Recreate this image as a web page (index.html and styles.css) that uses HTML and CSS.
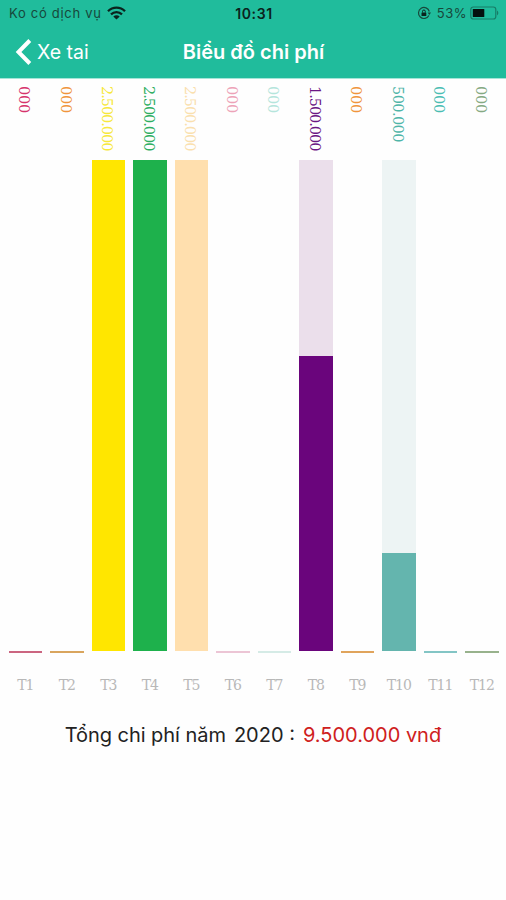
FILE: index.html
```
<!DOCTYPE html>
<html lang="vi">

<head>
    <meta charset="UTF-8">
    <title>Biểu đồ chi phí</title>
    <link rel="stylesheet" href="styles.css">
</head>

<body>
    <div class="header">
        <div class="status">
            <div class="carrier">
                <span class="carrier_name">Ko có dịch vụ</span>
                <svg class="wifi" width="19" height="14" viewBox="0 0 19 14">
                    <path d="M1 5.2C5.8.4 13.2.4 18 5.2M4 8.3c3.2-3 7.800-3 11 0" fill="none" stroke="#0b231d" stroke-width="2.300" />
                    <path d="M6.300 10.400c1.900-1.700 4.500-1.700 6.400 0L9.500 13.600z" fill="#0b231d" />
                </svg>
            </div>
            <div class="time">10:31</div>
            <div class="power">
                <svg class="lock" width="14" height="14" viewBox="0 0 14 14">
                    <path d="M11.900 9.500A5.500 5.500 0 1 1 12.300 5.500" fill="none" stroke="#17483b" stroke-width="1.200" />
                    <path d="M10.600 6.600h3.400l-1.700 2.300z" fill="#17483b" />
                    <rect x="4.500" y="6.400" width="4.800" height="3.600" rx=".5" fill="#0b231d" />
                    <path d="M5.500 6.500V5.400a1.400 1.400 0 0 1 2.800 0v1.100" fill="none" stroke="#0b231d" />
                </svg>
                <span class="percent">53%</span>
                <svg width="29" height="14" viewBox="0 0 29 14">
                    <rect x=".8" y="1" width="25" height="12" rx="2.500" fill="none" stroke="#167c66" stroke-width="1.200" />
                    <rect x="2.800" y="3" width="11.500" height="8" rx=".6" fill="#04110e" />
                    <path d="M27 4.600c1.800.8 1.800 4 0 4.800z" fill="#167c66" />
                </svg>
            </div>
        </div>
        <div class="nav">
            <div class="back">
                <svg width="17" height="28" viewBox="0 0 17 28">
                    <path d="M14.800 2.500L3.500 14l11.300 11.500" fill="none" stroke="#fff" stroke-width="4" />
                </svg>
                <span>Xe tai</span>
            </div>
            <div class="title">Biểu đồ chi phí</div>
        </div>
    </div>

    <div class="chart" id="chart"></div>

    <div class="total">
        <span class="total_label">Tổng chi phí năm</span>
        <span class="total_year">2020 :</span>
        <span class="total_value">9.500.000 vnđ</span>
    </div>

    <script type="text/javascript">
    var max = 2500000;
    // value, text colour, bar colour, track colour
    var months = [
        [0, '#d6336c', '#cb6580'],
        [0, '#f0953c', '#d9a55e'],
        [2500000, '#f7e83c', '#ffe600'],
        [2500000, '#2fae62', '#1eb14c'],
        [2500000, '#fae0ae', '#ffdfae'],
        [0, '#eda3b8', '#ecc5d5'],
        [0, '#b5e5dc', '#d5ebe6'],
        [1500000, '#6c1684', '#6a057c', '#ebdfeb'],
        [0, '#f0953c', '#e0a45c'],
        [500000, '#4fb5a8', '#64b5ae', '#edf4f4'],
        [0, '#4bbdb3', '#83c5c5'],
        [0, '#85a983', '#98b28c']
    ];

    function format(n) {
        if (n == 0) {
            return '000';
        }
        return String(n).replace(/\B(?=(\d{3})+$)/g, '.');
    }

    var html = '';
    for (var i = 0; i < months.length; i++) {
        var m = months[i];
        var h = m[0] / max * 100;
        html += '<div class="month">' +
            '<div class="value' + (m[0] ? ' value_mid' : '') + (m[0] >= 1000000 ? ' value_long' : '') + '" style="color:' + m[1] + '">' + format(m[0]) + '</div>' +
            '<div class="track" style="background:' + (m[3] || 'none') + '">' +
            '<div class="bar' + (m[0] ? '' : ' bar_empty') + '" style="height:' + h + '%;background:' + m[2] + '"></div>' +
            '</div>' +
            '<div class="name">T' + (i + 1) + '</div>' +
            '</div>';
    }
    document.getElementById('chart').innerHTML = html;
    </script>
</body>

</html>
```
FILE: styles.css
```
body {
    margin: 0;
    background-color: #FEFEFE;
    font-family: Inter, "Liberation Sans", sans-serif;
}

.header {
    height: 78px;
    background-color: #20BC9C;
    border-bottom: 1px solid #A5E5D8;
}

.status {
    display: grid;
    grid-template-columns: 1fr auto 1fr;
    align-items: center;
    height: 26px;
    padding: 0 7px 0 9px;
    font-size: 13px;
    color: #17483B;
}

.carrier,
.power {
    display: flex;
    align-items: center;
}

.carrier_name {
    letter-spacing: 0.7px;
}

.wifi {
    margin-left: 5px;
}

.time {
    color: #0B231D;
    font-size: 14px;
    font-weight: 600;
    letter-spacing: 0.6px;
}

.power {
    justify-content: flex-end;
}

.percent {
    margin: 0 3px 0 6px;
    letter-spacing: 0.5px;
}

.nav {
    display: grid;
    grid-template-columns: 1fr auto 1fr;
    align-items: center;
    height: 52px;
    color: #FFF;
}

.back {
    display: flex;
    align-items: center;
    gap: 5px;
    padding-left: 15px;
    font-size: 19.5px;
}

.title {
    font-size: 20px;
    font-weight: 600;
    padding-left: 1px;
}

.chart {
    display: grid;
    grid-template-columns: repeat(12, 1fr);
    column-gap: 8px;
    padding: 0 7.5px 0 8.5px;
    font-family: "DejaVu Serif", serif;
}

.month {
    display: flex;
    flex-direction: column;
    align-items: center;
}

.value {
    height: 73px;
    padding-top: 7px;
    padding-right: 2px;
    box-sizing: border-box;
    writing-mode: vertical-rl;
    font-size: 14.5px;
    line-height: 20px;
    letter-spacing: -0.2px;
    white-space: nowrap;
}

.value_mid {
    letter-spacing: -0.6px;
}

.value_long {
    letter-spacing: -1.05px;
}

.track {
    display: flex;
    align-items: flex-end;
    width: 100%;
    height: 491px;
    margin-top: 8px;
}

.bar {
    width: 100%;
    min-height: 2px;
}

.bar_empty {
    margin-bottom: -2px;
}

.name {
    margin-top: 24px;
    font-size: 14px;
    line-height: 20px;
    letter-spacing: -1px;
    color: #B8B8B8;
}

.total {
    display: flex;
    justify-content: center;
    gap: 8px;
    margin-top: 27px;
    font-size: 20px;
    line-height: 26px;
    color: #222;
}

.total_label {
    letter-spacing: -0.05px;
}

.total_value {
    color: #CF2020;
}
```
